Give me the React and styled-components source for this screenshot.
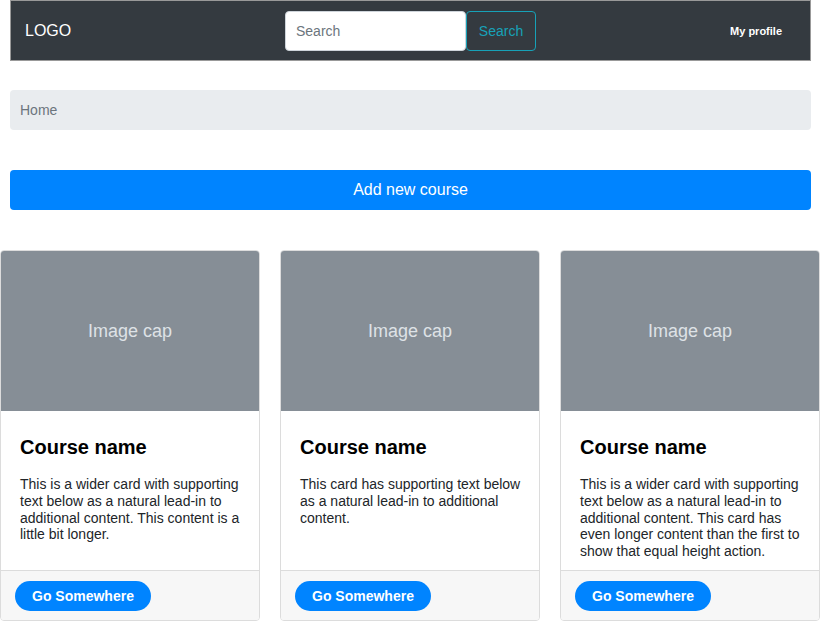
import React from "react";
import styled, { createGlobalStyle } from "styled-components";

const courses = [
  {
    id: 1,
    text: "This is a wider card with supporting text below as a natural lead-in to additional content. This content is a little bit longer.",
  },
  {
    id: 2,
    text: "This card has supporting text below as a natural lead-in to additional content.",
  },
  {
    id: 3,
    text: "This is a wider card with supporting text below as a natural lead-in to additional content. This card has even longer content than the first to show that equal height action.",
  },
];

function App() {
  return (
    <>
      <GlobalStyle />
      <Page>
        <NavBar>
          <Logo>LOGO</Logo>
          <SearchForm onSubmit={e => e.preventDefault()}>
            <SearchInput placeholder="Search" />
            <SearchButton type="submit">Search</SearchButton>
          </SearchForm>
          <ProfileLink href="#">My profile</ProfileLink>
        </NavBar>

        <Breadcrumb>
          <Crumb>Home</Crumb>
        </Breadcrumb>

        <AddButton>Add new course</AddButton>

        <CardGrid>
          {courses.map(course => (
            <Card key={course.id}>
              <ImageCap>Image cap</ImageCap>
              <CardBody>
                <CardTitle>Course name</CardTitle>
                <CardText>{course.text}</CardText>
              </CardBody>
              <CardFooter>
                <PillButton>Go Somewhere</PillButton>
              </CardFooter>
            </Card>
          ))}
        </CardGrid>
      </Page>
    </>
  );
}

export default App;

const GlobalStyle = createGlobalStyle`
  * {
    box-sizing: border-box;
  }
  body {
    margin: 0;
    font-family: "Liberation Sans", Arial, sans-serif;
    color: #212529;
    background: #fff;
  }
`;

const Page = styled.div`
  width: 821px;
  display: flex;
  flex-direction: column;
`;

const NavBar = styled.nav`
  margin: 0 10px;
  height: 61px;
  background: #343a40;
  border: 1px solid #999;
  display: grid;
  grid-template-columns: 1fr auto 1fr;
  align-items: center;
  padding: 0 14px;
`;

const Logo = styled.div`
  color: #fff;
  font-size: 16px;
`;

const SearchForm = styled.form`
  display: flex;
  margin: 0;
`;

const SearchInput = styled.input`
  width: 181px;
  height: 40px;
  border: 1px solid #ced4da;
  border-radius: 4px;
  padding: 0 10px;
  font-family: inherit;
  font-size: 14px;
  color: #495057;
  outline: none;
  &::placeholder {
    color: #6c757d;
  }
`;

const SearchButton = styled.button`
  width: 70px;
  height: 40px;
  background: transparent;
  border: 1px solid #17a2b8;
  border-radius: 4px;
  color: #17a2b8;
  font-family: inherit;
  font-size: 14px;
  cursor: pointer;
`;

const ProfileLink = styled.a`
  justify-self: end;
  margin-right: 14px;
  color: #fff;
  font-size: 11px;
  font-weight: 700;
  text-decoration: none;
`;

const Breadcrumb = styled.div`
  margin: 29px 10px 0;
  height: 40px;
  background: #e9ecef;
  border-radius: 4px;
  display: flex;
  align-items: center;
  padding: 0 10px;
`;

const Crumb = styled.span`
  color: #6c757d;
  font-size: 14px;
`;

const AddButton = styled.button`
  margin: 40px 10px 0;
  height: 40px;
  background: #0084ff;
  border: none;
  border-radius: 4px;
  color: #fff;
  font-family: inherit;
  font-size: 16px;
  cursor: pointer;
`;

const CardGrid = styled.div`
  margin-top: 40px;
  display: grid;
  grid-template-columns: repeat(3, 260px);
  gap: 20px;
`;

const Card = styled.div`
  height: 371px;
  border: 1px solid #dcdcdc;
  border-radius: 4px;
  overflow: hidden;
  display: flex;
  flex-direction: column;
`;

const ImageCap = styled.div`
  height: 160px;
  background: #868e96;
  color: #dee2e6;
  font-size: 18px;
  display: flex;
  align-items: center;
  justify-content: center;
  flex-shrink: 0;
`;

const CardBody = styled.div`
  flex: 1;
  padding: 24px 16px 10px 19px;
`;

const CardTitle = styled.h5`
  margin: 0 0 17px;
  font-size: 20px;
  font-weight: 700;
  line-height: 24px;
  color: #000;
`;

const CardText = styled.p`
  margin: 0;
  font-size: 14px;
  line-height: 16.8px;
  color: #212529;
`;

const CardFooter = styled.div`
  height: 50px;
  background: #f7f7f7;
  border-top: 1px solid #dcdcdc;
  display: flex;
  align-items: center;
  padding: 0 14px;
`;

const PillButton = styled.button`
  height: 30px;
  padding: 0 17px;
  background: #0084ff;
  border: none;
  border-radius: 15px;
  color: #fff;
  font-family: inherit;
  font-size: 14px;
  font-weight: 700;
  cursor: pointer;
`;
